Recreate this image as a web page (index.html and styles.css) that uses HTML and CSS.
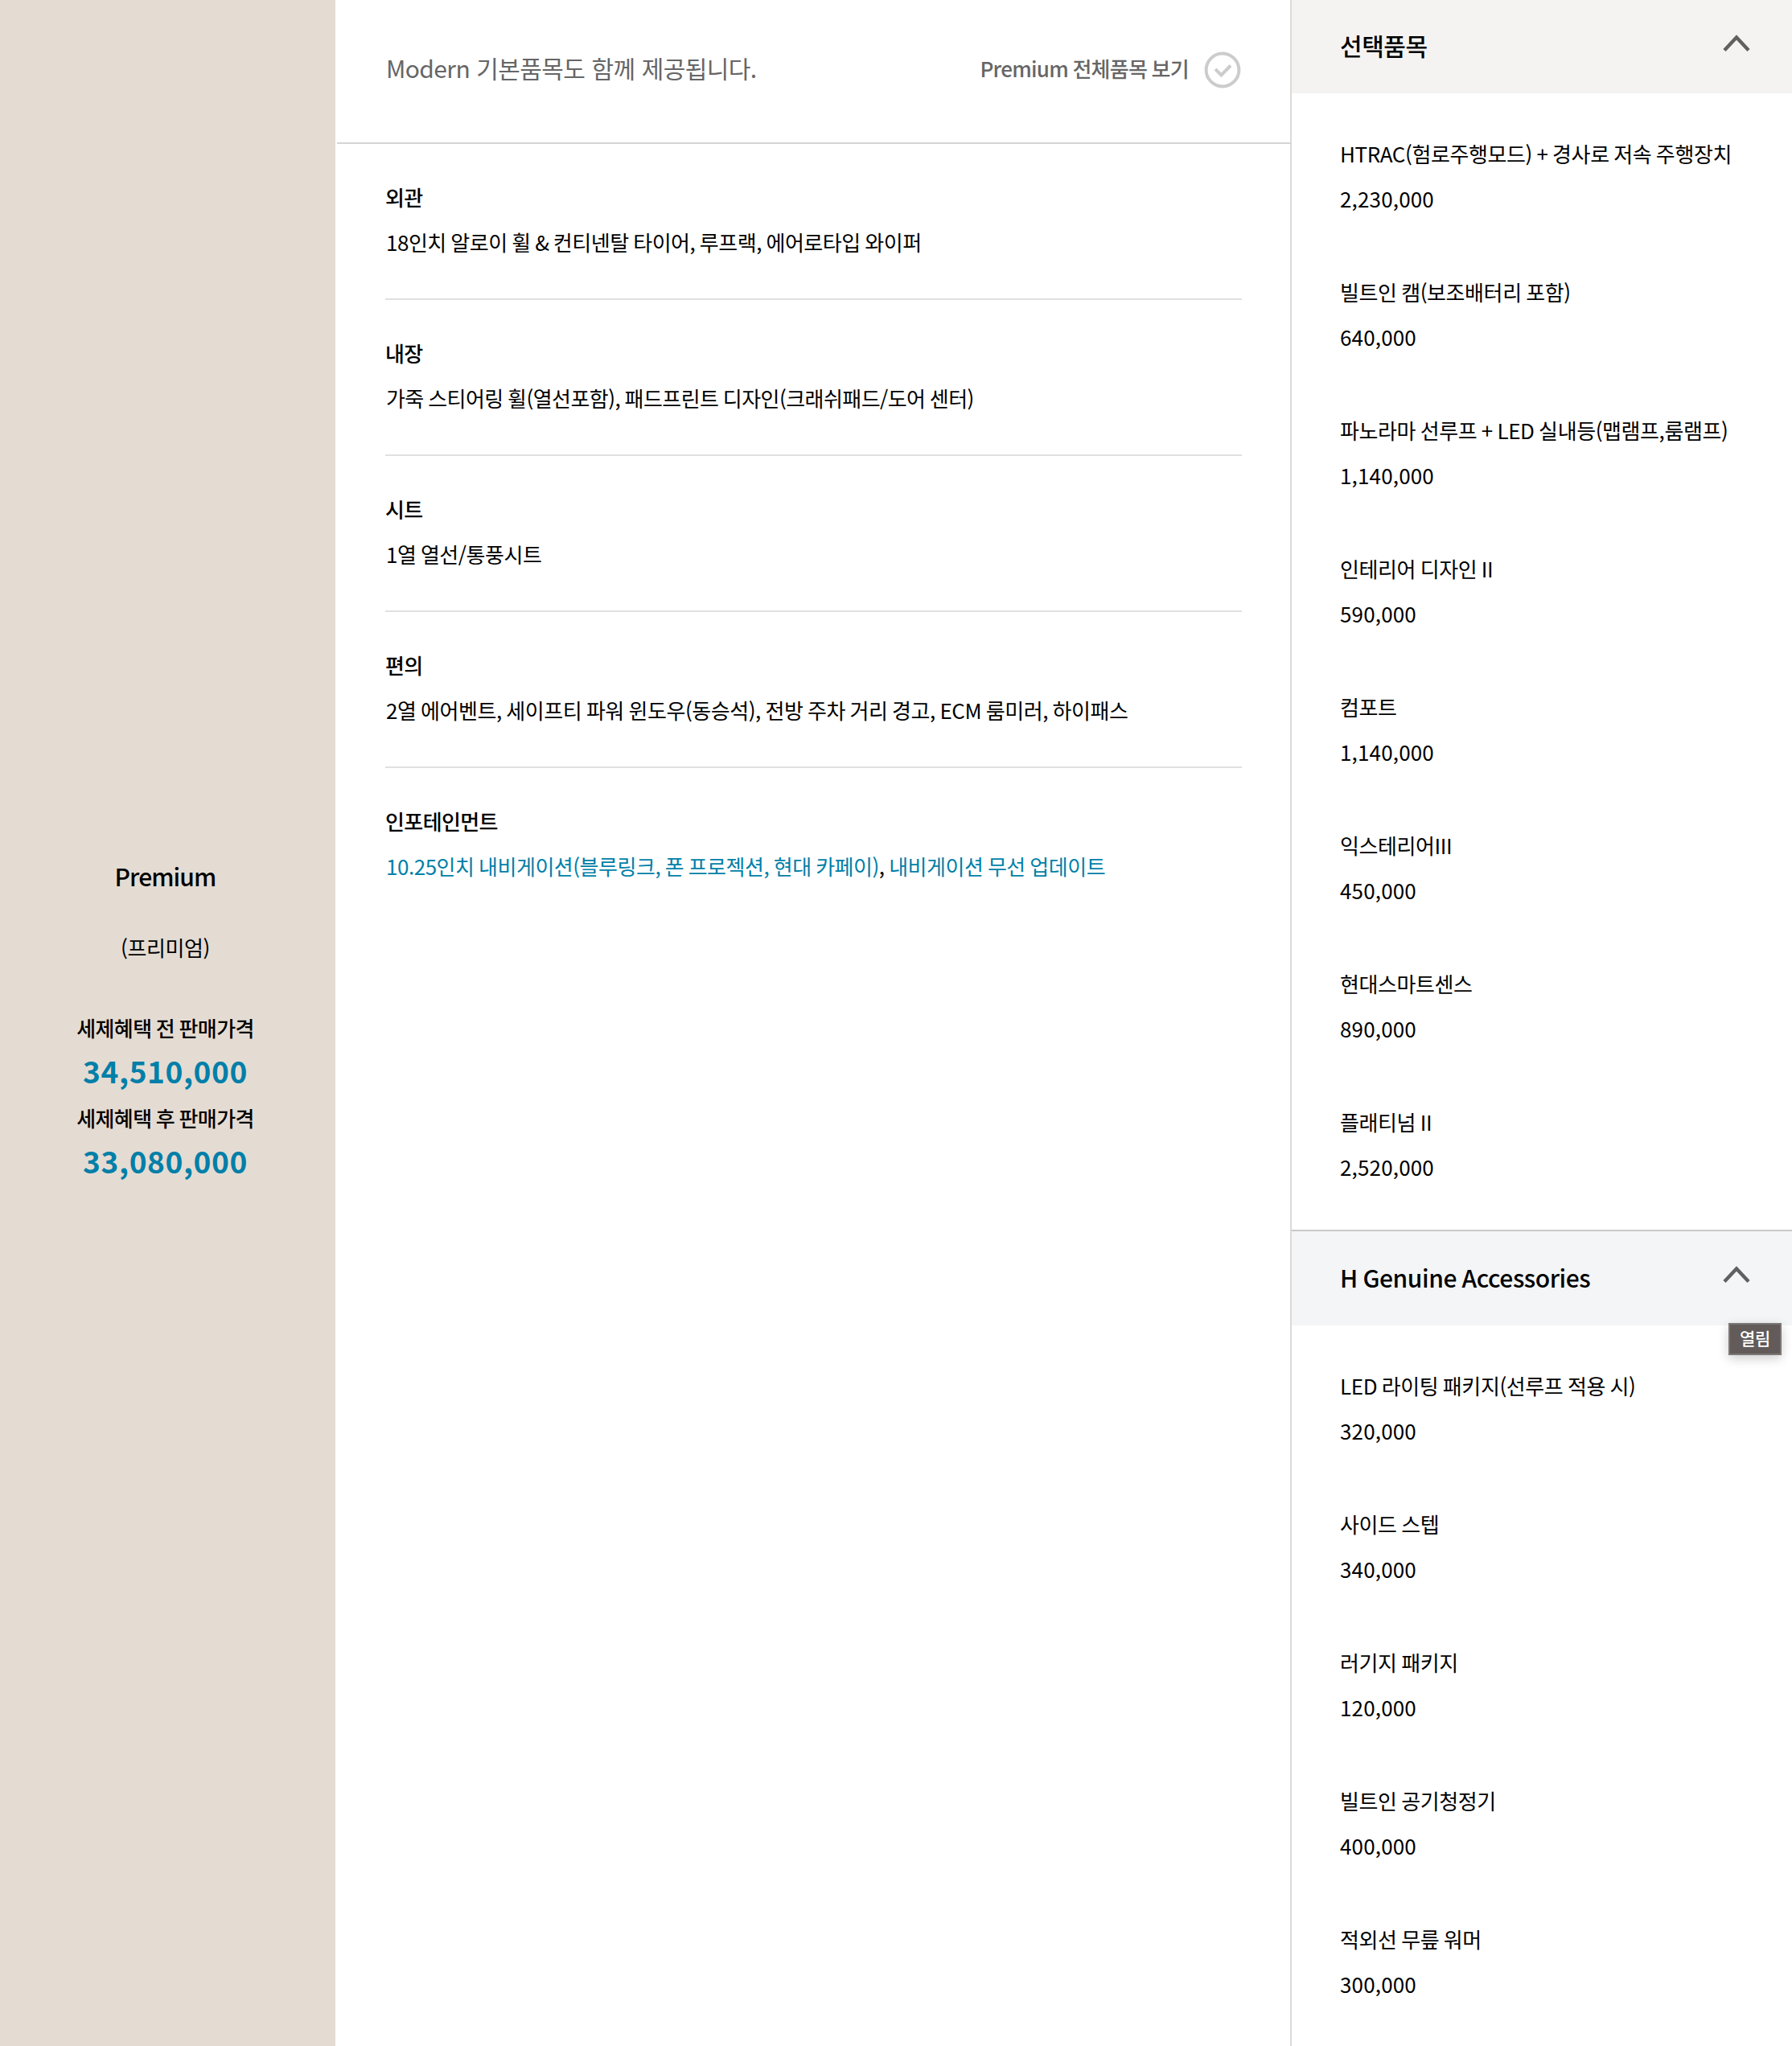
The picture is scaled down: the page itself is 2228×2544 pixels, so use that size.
FILE: index.html
```html
<!DOCTYPE html>
<html lang="ko">
<head>
<meta charset="utf-8">
<title>Premium</title>
<link rel="stylesheet" href="styles.css">
</head>
<body>
<div class="trim">
  <aside class="trim-summary">
    <h1 class="trim-name">Premium</h1>
    <p class="trim-local">(프리미엄)</p>
    <dl class="prices">
      <dt>세제혜택 전 판매가격</dt>
      <dd>34,510,000</dd>
      <dt>세제혜택 후 판매가격</dt>
      <dd>33,080,000</dd>
    </dl>
  </aside>
  <main class="basics">
    <header class="basics-head">
      <p class="basics-note">Modern 기본품목도 함께 제공됩니다.</p>
      <a class="view-all"><span class="view-all-label">Premium 전체품목 보기</span>
        <svg class="check" viewBox="0 0 46 46"><circle cx="23" cy="23" r="20.4"/><path d="M14 22l7.5 7.5L33 17.5"/></svg>
      </a>
    </header>
    <div class="groups">
      <section class="group"><h2>외관</h2><p>18인치 알로이 휠 &amp; 컨티넨탈 타이어, 루프랙, 에어로타입 와이퍼</p></section>
      <section class="group"><h2>내장</h2><p class="tight">가죽 스티어링 휠(열선포함), 패드프린트 디자인(크래쉬패드/도어 센터)</p></section>
      <section class="group"><h2>시트</h2><p>1열 열선/통풍시트</p></section>
      <section class="group"><h2>편의</h2><p class="wide">2열 에어벤트, 세이프티 파워 윈도우(동승석), 전방 주차 거리 경고, ECM 룸미러, 하이패스</p></section>
      <section class="group"><h2>인포테인먼트</h2><p><a>10.25인치 내비게이션(블루링크, 폰 프로젝션, 현대 카페이)</a>, <a>내비게이션 무선 업데이트</a></p></section>
    </div>
  </main>
  <aside class="options">
    <section class="panel">
      <header class="panel-head warm"><h2>선택품목</h2>
        <svg class="chevron" viewBox="0 0 36 24"><path d="M3 20.5L18 4.5l15 16"/></svg></header>
      <dl class="items">
        <div class="item"><dt>HTRAC(험로주행모드) + 경사로 저속 주행장치</dt><dd>2,230,000</dd></div>
        <div class="item"><dt>빌트인 캠(보조배터리 포함)</dt><dd>640,000</dd></div>
        <div class="item"><dt>파노라마 선루프 + LED 실내등(맵램프,룸램프)</dt><dd>1,140,000</dd></div>
        <div class="item"><dt>인테리어 디자인 II</dt><dd>590,000</dd></div>
        <div class="item"><dt>컴포트</dt><dd>1,140,000</dd></div>
        <div class="item"><dt>익스테리어III</dt><dd>450,000</dd></div>
        <div class="item"><dt>현대스마트센스</dt><dd>890,000</dd></div>
        <div class="item"><dt>플래티넘 II</dt><dd>2,520,000</dd></div>
      </dl>
    </section>
    <section class="panel">
      <header class="panel-head cool"><h2>H Genuine Accessories</h2>
        <svg class="chevron" viewBox="0 0 36 24"><path d="M3 20.5L18 4.5l15 16"/></svg>
        <span class="tooltip">열림</span></header>
      <dl class="items">
        <div class="item"><dt>LED 라이팅 패키지(선루프 적용 시)</dt><dd>320,000</dd></div>
        <div class="item"><dt>사이드 스텝</dt><dd>340,000</dd></div>
        <div class="item"><dt>러기지 패키지</dt><dd>120,000</dd></div>
        <div class="item"><dt>빌트인 공기청정기</dt><dd>400,000</dd></div>
        <div class="item"><dt>적외선 무릎 워머</dt><dd>300,000</dd></div>
      </dl>
    </section>
  </aside>
</div>
</body>
</html>
```
FILE: styles.css
```css
* { box-sizing: border-box; margin: 0; padding: 0; }
body {
  font-family: "Noto Sans CJK KR", sans-serif;
  font-size: 26px;
  line-height: 56px;
  letter-spacing: -0.4px;
  word-spacing: -1.3px;
  color: #000;
  background: #fff;
  overflow: hidden;
}
h1, h2 { font-weight: 500; }
.trim { display: grid; grid-template-columns: 417px 1187px 624px; height: 2544px; }

.trim-summary {
  display: flex; flex-direction: column; justify-content: center; align-items: center;
  padding: 0 6px 3px 0; background: #e4dcd3; text-align: center;
}
.trim-name { font-size: 30px; line-height: 42px; letter-spacing: -0.9px; }
.trim-local { margin: 40px 0 44px; }
.prices dt { font-weight: 500; letter-spacing: -0.6px; }
.prices dd {
  padding-bottom: 6px; line-height: 50px;
  font-size: 37px; font-weight: 700; letter-spacing: 0.6px; color: #007fa8;
}

.basics-head {
  display: flex; justify-content: space-between; align-items: center;
  height: 179px; padding: 0 61px 4px 61px; margin-left: 2px;
  border-bottom: 2px solid #d5d5d5; color: #666;
}
.basics-note { padding-bottom: 6px; font-size: 30px; letter-spacing: -0.6px; word-spacing: 0.4px; }
.view-all { display: flex; align-items: center; gap: 19px; font-weight: 500; }
.view-all-label { padding-bottom: 3px; letter-spacing: -0.7px; }
.check { width: 46px; height: 46px; fill: none; stroke: #ccc; stroke-width: 4; }
.groups { padding: 0 60px 0 62px; }
.group { padding: 38px 0 42px; border-bottom: 2px solid #e0e0e0; white-space: nowrap; }
.group:last-child { border-bottom: 0; }
.group h2 { font-size: 26px; letter-spacing: -0.6px; }
.group p { padding-left: 1px; letter-spacing: -0.47px; }
.group .tight { letter-spacing: -0.55px; }
.group .wide { letter-spacing: -0.43px; }
.group a { color: #007fa8; }

.options { border-left: 2px solid #ddd9d7; white-space: nowrap; }
.panel-head {
  position: relative;
  display: flex; justify-content: space-between; align-items: center;
  height: 116px; padding: 0 51px 0 60px;
}
.panel-head h2 { padding-bottom: 4px; font-size: 30px; letter-spacing: -0.45px; }
.warm { background: #f5f3f2; }
.cool { height: 119px; border-top: 2px solid #c9c9c9; background: #f3f5f6; }
.chevron { width: 36px; height: 24px; margin-top: -9px; fill: none; stroke: #606060; stroke-width: 4.4; }
.items { display: flex; flex-direction: column; gap: 60px; padding: 47px 0 50px 60px; }
.item dd { letter-spacing: 0.15px; }
.tooltip {
  position: absolute; right: 13px; top: 114px; width: 66px; height: 40px;
  border: 2px solid #7b7675; background: #625b59; color: #fff;
  box-shadow: 0 4px 14px rgba(0, 0, 0, .2);
  font-size: 21px; font-weight: 500; line-height: 32px; text-align: center;
}
```
